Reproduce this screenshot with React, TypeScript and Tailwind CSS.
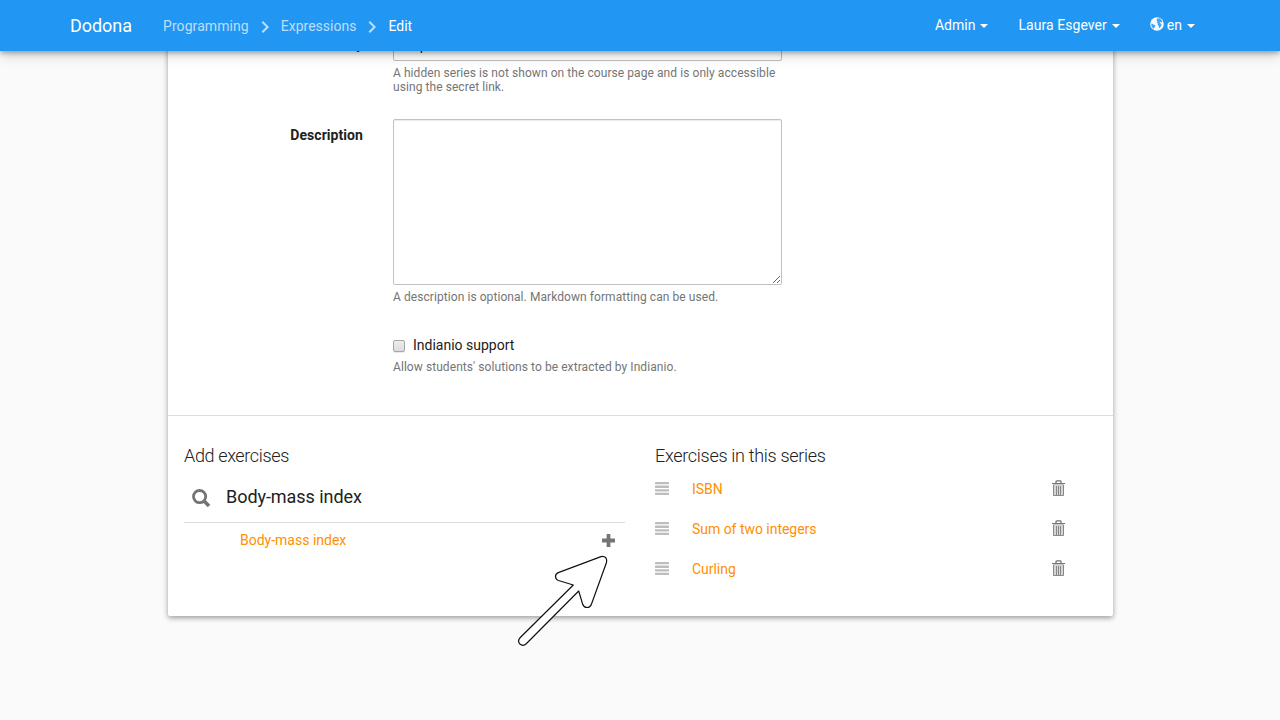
import { MdChevronRight } from "react-icons/md";

function Caret() {
  return <span className="ml-[5px] inline-block border-x-4 border-t-4 border-x-transparent border-t-white align-middle" />;
}

function GlobeIcon() {
  return (
    <svg width="14" height="14" viewBox="0 0 14 14" className="-mt-[2px] shrink-0">
      <circle cx="7" cy="7" r="6.8" fill="#ffffff" fillOpacity=".95" />
      <path
        d="M7.2 1.6 L9.2 1.2 L11.2 2.4 L12.4 4.4 L11.6 5.4 L10.2 5 L9.6 6 L11.2 6.8 L11.6 8 L10.2 10.6 L9.2 11.2 L8.8 9.2 L7.6 7.8 L7.8 6.2 L6.8 5.6 L7.4 4 L6.4 3.2 Z M1.6 6.4 L3.6 7.4 L5.4 8.6 L5.2 9.8 L4.2 10.8 L3.8 12 L2 10.2 L1.2 8 Z"
        fill="#2196f3"
        fillOpacity=".85"
      />
    </svg>
  );
}

function SearchIcon() {
  return (
    <svg width="19" height="19" viewBox="0 0 19 19" fill="none" stroke="#757575" className="mt-[2px]">
      <circle cx="7.6" cy="7.6" r="6.1" strokeWidth="2.8" />
      <path d="M11.8 11.8 L17 17" strokeWidth="3.6" />
    </svg>
  );
}

function DragIcon() {
  return (
    <svg width="14" height="14" viewBox="0 0 14 14" fill="#bdbdbd">
      <rect y="0" width="14" height="2.33" rx=".4" />
      <rect y="3.6" width="14" height="2.33" rx=".4" />
      <rect y="7.2" width="14" height="2.33" rx=".4" />
      <rect y="10.7" width="14" height="2.33" rx=".4" />
    </svg>
  );
}

function TrashIcon() {
  return (
    <svg width="13" height="16" viewBox="0 0 13 16" fill="none" stroke="#757575">
      <path d="M4 3 V1.7 Q4 .9 4.8 .9 H8.2 Q9 .9 9 1.7 V3" strokeWidth="1.3" />
      <path d="M0 3.5 H13" strokeWidth="1" />
      <path d="M1 4.5 H12" strokeWidth="1" strokeOpacity=".4" />
      <path d="M1.5 5 H11.5 V15 H1.5 Z" fill="#757575" fillOpacity=".3" stroke="none" />
      <path d="M1.5 5 V15.5 H11.5 V5" strokeWidth="1" strokeOpacity=".85" />
      <path d="M4.5 6 V15 M6.5 6 V15 M8.5 6 V15" strokeWidth="1" strokeOpacity=".8" />
    </svg>
  );
}

function PlusIcon() {
  return (
    <svg width="13" height="13" viewBox="0 0 13 13">
      <path d="M5.1 0h2.8q.5 0 .5.5v4.1h4.1q.5 0 .5.5v2.8q0 .5-.5.5H8.4v4.1q0 .5-.5.5H5.1q-.5 0-.5-.5V8.4H.5q-.5 0-.5-.5V5.1q0-.5.5-.5h4.1V.5q0-.5.5-.5z" fill="#757575" />
    </svg>
  );
}

function Help({ children }: { children: string }) {
  return <p className="text-[12px] leading-[14px] tracking-[0.07px] text-[#757575]">{children}</p>;
}

const exercises = ["ISBN", "Sum of two integers", "Curling"];

export default function App() {
  return (
    <div className="relative flex h-[720px] w-[1280px] flex-col overflow-hidden bg-[#fafafa] font-['Roboto',sans-serif] text-[14px] leading-5 text-[#212121]">
      <header className="relative z-10 flex h-[51px] shrink-0 justify-between bg-[#2196f3] pr-[85px] pl-[70px] text-white shadow-[0_2px_5px_0_rgba(0,0,0,0.28),0_4px_12px_0_rgba(0,0,0,0.18)]">
        <nav className="flex h-[52px] items-center">
          <a className="w-[93px] text-[18px] tracking-[-0.05px]">Dodona</a>
          <a className="tracking-[0.08px] text-white/70">Programming</a>
          <MdChevronRight className="mx-1 mt-[2px] size-6 text-white/70" />
          <a className="text-white/70">Expressions</a>
          <MdChevronRight className="mx-1 mt-[2px] size-6 text-white/70" />
          <a>Edit</a>
        </nav>
        <nav className="flex h-[50px] items-center gap-[30px]">
          <a>Admin<Caret /></a>
          <a className="tracking-[0.06px]">Laura Esgever<Caret /></a>
          <a className="flex items-center">
            <GlobeIcon />
            <span className="ml-[3px]">en<Caret /></span>
          </a>
        </nav>
      </header>

      <main className="mx-auto -mt-[51px] ml-[168px] flex h-[616px] w-[945px] shrink-0 flex-col rounded-b-[2px] bg-white shadow-[0_2px_5px_0_rgba(0,0,0,0.26),0_2px_6px_0_rgba(0,0,0,0.14)]">
        <form className="h-[415px] pt-[27px]">
          <div className="flex gap-[30px]">
            <label className="w-[195px] pt-[7px] text-right font-bold">Visibility</label>
            <div className="w-[389px]">
              <div className="mb-[5px] h-[34px] rounded-[2px] border border-[#bdbdbd] bg-white px-4 pt-[7px]">Open</div>
              <Help>A hidden series is not shown on the course page and is only accessible using the secret link.</Help>
            </div>
          </div>
          <div className="mt-[25px] flex gap-[30px]">
            <label className="w-[195px] pt-[6px] text-right font-bold tracking-[0.06px]">Description</label>
            <div className="w-[389px]">
              <textarea className="mb-[5px] block h-[166px] w-full rounded-[2px] border border-[#c2c2c2] bg-white shadow-[inset_0_1px_1px_rgba(0,0,0,0.08)] outline-none" />
              <Help>A description is optional. Markdown formatting can be used.</Help>
            </div>
          </div>
          <div className="mt-[31px] ml-[225px]">
            <label className="mb-[5px] flex items-center">
              <span className="mt-[2px] mr-2 size-3 rounded-[2px] border border-[#a6a6a6] bg-linear-to-b from-[#ededed] to-[#dcdcdc] shadow-[0_1px_0_rgba(0,0,0,0.08)]" />
              Indianio support
            </label>
            <Help>Allow students' solutions to be extracted by Indianio.</Help>
          </div>
        </form>

        <div className="grid flex-1 grid-cols-[441px_441px] gap-[30px] border-t border-[#dddddd] px-4 pt-[30px]">
          <section>
            <h4 className="text-[18px] font-light tracking-[-0.36px]">Add exercises</h4>
            <div className="flex h-[57px] items-center gap-[15px] border-b border-[#dddddd] pt-[7px] pl-2">
              <SearchIcon />
              <span className="mb-[2px] text-[18px] tracking-[-0.05px]">Body-mass index</span>
            </div>
            <div className="flex h-[35px] items-center justify-between pr-[10px] pl-[56px]">
              <a className="-mt-[2px] text-[#ff8f00]">Body-mass index</a>
              <PlusIcon />
            </div>
          </section>
          <section>
            <h4 className="mb-[3px] text-[18px] font-light tracking-[-0.3px]">Exercises in this series</h4>
            {exercises.map((name) => (
              <div key={name} className="flex h-10 items-start pt-[10px]">
                <div className="w-[37px] pt-[3px]"><DragIcon /></div>
                <a className="flex-1 tracking-[-0.03px] text-[#ff8f00]">{name}</a>
                <div className="mr-[31px] pt-[1px]"><TrashIcon /></div>
              </div>
            ))}
          </section>
        </div>
      </main>

      <svg className="absolute top-[550px] left-[510px] z-20" width="104" height="102" viewBox="510 550 104 102">
        <path
          d="M573.3 585 L558.5 580.5 Q555.5 579.2 555.5 576.5 Q555.5 573.8 558.3 572.6 L601 556.6 Q604.2 556 606 558 Q607 559.5 606.5 562.5 L591.5 604 Q590.2 607.5 587 607.5 Q583.8 607.5 582.7 604.3 L578.7 591 L526.5 643.5 Q523 646.8 519.9 644 Q517 641 520.3 637.5 Z"
          fill="#ffffff"
          stroke="#111111"
          strokeWidth="1.2"
          strokeLinejoin="round"
        />
      </svg>
    </div>
  );
}
